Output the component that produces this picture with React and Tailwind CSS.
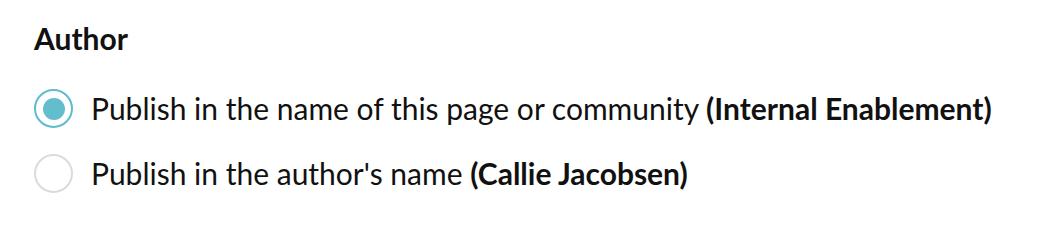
const options = [
  { id: 'page', label: 'Publish in the name of this page or community', name: 'Internal Enablement' },
  { id: 'author', label: "Publish in the author's name", name: 'Callie Jacobsen' },
];

function Radio({ checked }) {
  return (
    <span
      className={
        checked
          ? 'flex size-[39px] shrink-0 items-center justify-center rounded-full border-2 border-[#5dbccd] bg-white'
          : 'flex size-[39px] shrink-0 items-center justify-center rounded-full border-2 border-[#d9dbe0] bg-white'
      }
    >
      {checked && <span className="size-[22px] rounded-full bg-[#62bdcd]" />}
    </span>
  );
}

export default function App() {
  const selected = 'page';
  return (
    <div className="h-[226px] w-[1062px] bg-white px-[34px] pt-[20px] font-['Lato',sans-serif] text-[#111]">
      <h2 className="text-[30px] font-bold leading-[36px]">Author</h2>
      <div className="mt-[33px] flex flex-col gap-[26px]">
        {options.map((o) => (
          <label key={o.id} className="flex items-center gap-[18px]">
            <Radio checked={selected === o.id} />
            <span className="text-[30px] leading-[39px]">
              {o.label} <span className="font-bold">({o.name})</span>
            </span>
          </label>
        ))}
      </div>
    </div>
  );
}
